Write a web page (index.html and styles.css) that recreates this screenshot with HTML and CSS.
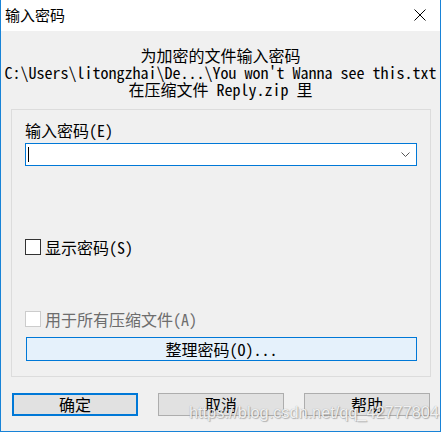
FILE: index.html
```html
<!DOCTYPE html>
<html lang="zh-CN">
<head>
  <meta charset="UTF-8" />
  <title>输入密码</title>
  <link rel="stylesheet" href="styles.css">
</head>
<body>
  <div class="window">
    <div class="titlebar">
      <span class="title">输入密码</span>
      <svg class="close" width="12" height="12" viewBox="0 0 12 12">
        <path d="M0.5 0.5 L11.5 11.5 M11.5 0.5 L0.5 11.5" stroke="#000" stroke-width="1" fill="none"/>
      </svg>
    </div>

    <div class="content">
      <div class="prompt">
        <div>为加密的文件输入密码</div>
        <div>C:\Users\litongzhai\De...\You won't Wanna see this.txt</div>
        <div>在压缩文件 Reply.zip 里</div>
      </div>

      <div class="group">
        <div class="label">输入密码(E)</div>
        <div class="combo">
          <span class="caret"></span>
          <svg class="arrow" width="9" height="5" viewBox="0 0 9 5">
            <path d="M0.5 0.5 L4.5 4.5 L8.5 0.5" stroke="#555" stroke-width="1" fill="none"/>
          </svg>
        </div>

        <div class="check-row show-pass">
          <span class="check"></span>
          <span>显示密码(S)</span>
        </div>

        <div class="check-row disabled">
          <span class="check"></span>
          <span>用于所有压缩文件(A)</span>
        </div>

        <div class="btn wide">整理密码(O)...</div>
      </div>

      <div class="buttons">
        <div class="btn default">确定</div>
        <div class="btn">取消</div>
        <div class="btn">帮助</div>
      </div>
    </div>

    <!-- site watermark over the lower buttons -->
    <div class="watermark">https://blog.csdn.net/qq_42777804</div>
  </div>
</body>
</html>
```

FILE: styles.css
```css
body {
  margin: 0;
  background: #fff;
}
.window {
  position: relative;
  width: 441px;
  height: 432px;
  box-sizing: border-box;
  border: 1px solid #1883d7;
  border-top: none;
  background: #f0f0f0;
  display: flex;
  flex-direction: column;
  overflow: hidden;
  font-family: "Noto Sans Mono CJK SC", "Noto Sans CJK SC", monospace;
  font-size: 16px;
  color: #000;
}
.titlebar {
  flex: 0 0 31px;
  background: #fff;
  display: flex;
  align-items: center;
  justify-content: space-between;
  padding: 0 14px 0 4px;
}
.title {
  font-family: "Noto Sans CJK SC", sans-serif;
  font-size: 15px;
  margin-top: -2px;
}
.close {
  margin-top: -2px;
}
.content {
  flex: 1;
  display: flex;
  flex-direction: column;
}
.prompt {
  text-align: center;
  line-height: 17px;
  padding-top: 16px;
  margin-bottom: 11px;
  white-space: nowrap;
}
.group {
  margin: 0 9px 0 10px;
  border: 1px solid #dcdcdc;
  padding: 12px 13px 15px 13px;
  display: flex;
  flex-direction: column;
}
.label {
  line-height: 17px;
  height: 17px;
  margin-bottom: 4px;
}
.combo {
  height: 23px;
  box-sizing: border-box;
  border: 1px solid #0078d7;
  background: #fff;
  display: flex;
  align-items: center;
  justify-content: space-between;
  padding: 0 6px 0 2px;
}
.caret {
  width: 1px;
  height: 15px;
  background: #000;
}
.check-row {
  display: flex;
  align-items: center;
  gap: 4px;
  height: 16px;
  line-height: 16px;
}
.check {
  width: 16px;
  height: 16px;
  box-sizing: border-box;
  border: 1px solid #333;
  background: #fff;
}
.show-pass {
  margin-top: 73px;
}
.disabled {
  margin-top: 56px;
  color: #6d6d6d;
}
.disabled .check {
  border-color: #ccc;
}
.btn {
  height: 23px;
  box-sizing: border-box;
  border: 1px solid #adadad;
  background: #e1e1e1;
  text-align: center;
  line-height: 21px;
}
.wide {
  height: 24px;
  margin: 10px 0 0 1px;
  border-color: #0078d7;
  background: #e5f1fb;
  line-height: 22px;
}
.buttons {
  display: flex;
  gap: 20px;
  margin: 16px 9px 0 11px;
}
.buttons .btn {
  flex: 0 0 126px;
}
.buttons .default {
  border: 2px solid #0078d7;
  line-height: 19px;
}
.watermark {
  position: absolute;
  left: 188px;
  top: 403px;
  font-family: "Liberation Sans", sans-serif;
  font-size: 16.3px;
  color: rgba(255, 255, 255, 0.85);
  text-shadow: 0 0 1px #999, 1px 1px 1px rgba(0, 0, 0, 0.25);
  white-space: nowrap;
}
```
